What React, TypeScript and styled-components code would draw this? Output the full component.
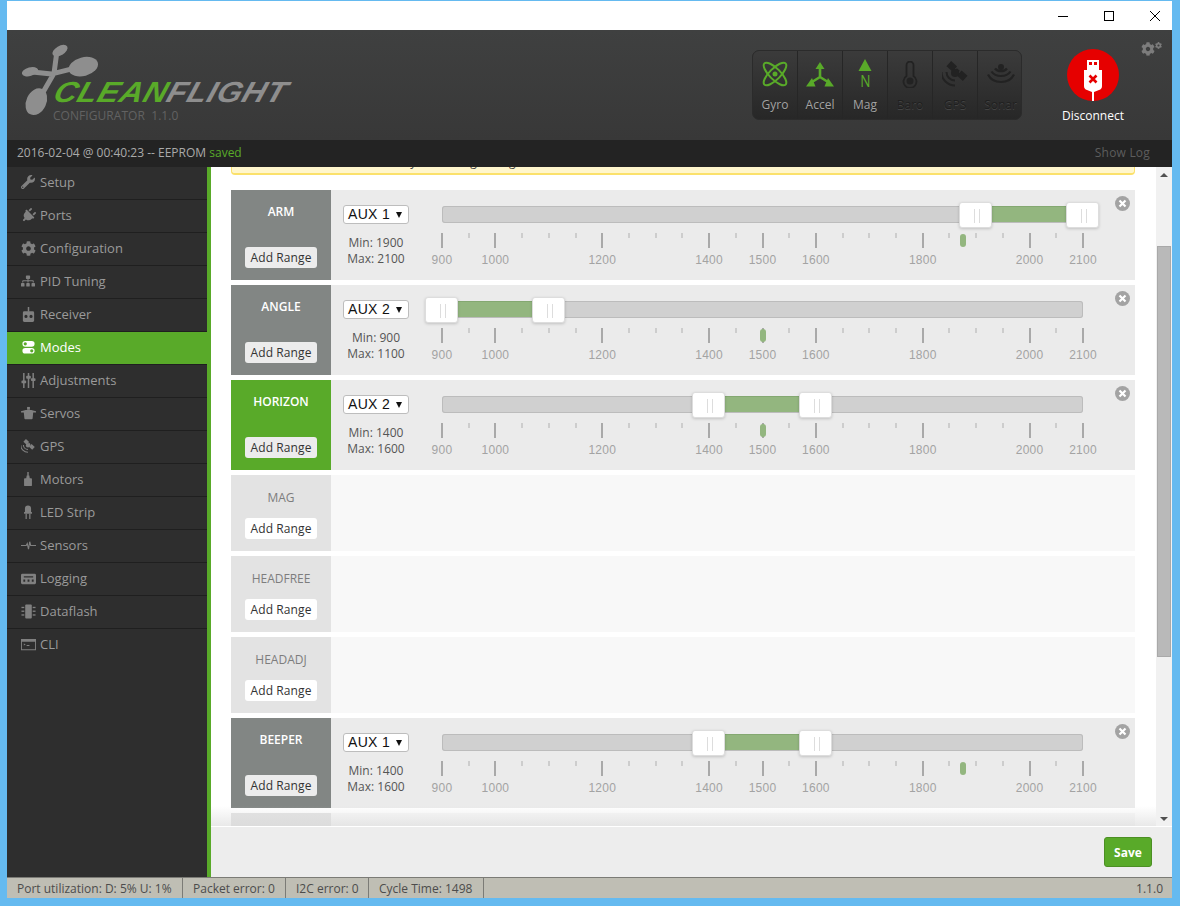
import React from "react"
import styled, { createGlobalStyle } from "styled-components"
import { FaWrench, FaPlug, FaCog, FaSitemap } from "react-icons/fa"

const GREEN = "#59aa29"

const GlobalStyle = createGlobalStyle`
    html, body {
        margin: 0;
        padding: 0;
        background: #65baf0;
    }
    * {
        box-sizing: border-box;
    }
`

const Frame = styled.div`
    width: 1180px;
    height: 906px;
    padding: 1px 8px 8px 7px;
    background: #65baf0;
    display: flex;
    flex-direction: column;
    overflow: hidden;
    font-family: "Open Sans", sans-serif;
    font-size: 12px;
`

const TitleBar = styled.div`
    height: 29px;
    flex: none;
    background: #fff;
    display: flex;
    justify-content: flex-end;
`

const WinButton = styled.div`
    width: 46px;
    height: 29px;
    display: flex;
    align-items: center;
    justify-content: center;
    color: #000;
    &:last-child {
        margin-right: -6px;
    }
`

const Header = styled.header`
    height: 110px;
    flex: none;
    background: linear-gradient(#3f4040, #383838);
    position: relative;
    display: flex;
    padding: 20px 0 0 15px;
`

const Logo = styled.div`
    width: 730px;
    position: relative;
    padding: 30px 0 0 33px;
`

const DroneSvg = styled.svg`
    position: absolute;
    left: -7px;
    top: -15px;
`

const WordMark = styled.div`
    font-family: "Liberation Sans", sans-serif;
    font-weight: 700;
    font-style: italic;
    font-size: 29px;
    line-height: 24px;
    height: 24px;
    letter-spacing: 0.6px;
    white-space: nowrap;
    color: #8e8e8e;
    margin-left: -4px;
    transform: skewX(-18deg) scaleX(1.1);
    transform-origin: left bottom;
    position: relative;
    span {
        color: ${GREEN};
    }
`

const LogoSub = styled.div`
    position: relative;
    margin: 4px 0 0 -2px;
    font-size: 12px;
    line-height: 16px;
    color: #626262;
    letter-spacing: 0.05px;
    white-space: pre;
`

const SensorGroup = styled.div`
    width: 270px;
    height: 70px;
    border: 1px solid #2b2b2b;
    border-radius: 7px;
    display: flex;
    overflow: hidden;
    background: #2a2a2a;
`

const SensorCell = styled.div<{ $on?: boolean }>`
    width: 45px;
    flex: none;
    border-right: 1px solid #262626;
    background: linear-gradient(#3b3b3b, #272727);
    display: flex;
    flex-direction: column;
    align-items: center;
    padding-top: 5px;
    color: ${(p) => (p.$on ? GREEN : "#222")};
    &:last-child {
        border-right: 0;
    }
`

const SensorIcon = styled.div`
    height: 36px;
    display: flex;
    flex-direction: column;
    align-items: center;
    justify-content: center;
`

const SensorLabel = styled.div<{ $on?: boolean }>`
    font-size: 12px;
    line-height: 18px;
    margin-top: 4px;
    color: ${(p) => (p.$on ? "#a3a3a3" : "#1f1f1f")};
    text-shadow: 0 1px 0 ${(p) => (p.$on ? "#222" : "#444")};
`

const MagLetter = styled.span`
    font-size: 17px;
    line-height: 16px;
    margin-top: 2px;
    transform: scaleX(0.8);
`

const ConnectBlock = styled.div`
    width: 72px;
    margin-left: 35px;
    display: flex;
    flex-direction: column;
    align-items: center;
    margin-top: -1px;
`

const ConnectButton = styled.div`
    width: 52px;
    height: 52px;
    border-radius: 50%;
    background: #e60000;
    display: flex;
    align-items: flex-start;
    justify-content: center;
    padding-top: 11px;
`

const ConnectLabel = styled.div`
    margin-top: 6px;
    font-size: 12px;
    line-height: 18px;
    color: #fff;
    white-space: nowrap;
`

const GearWrap = styled.div`
    position: absolute;
    right: 10px;
    top: 12px;
    color: #7c7c7c;
    display: flex;
    align-items: flex-start;
`

const LogBar = styled.div`
    height: 27px;
    flex: none;
    background: #232323;
    display: flex;
    align-items: center;
    justify-content: space-between;
    padding: 0 22px 2px 10px;
    color: #aaa;
    font-size: 12px;
    b {
        font-weight: 400;
        color: ${GREEN};
    }
`

const ShowLog = styled.div`
    color: #5d5d5d;
    letter-spacing: 0.2px;
`

const Main = styled.div`
    flex: 1;
    min-height: 0;
    display: flex;
`

const Sidebar = styled.nav`
    width: 204px;
    flex: none;
    background: #2e2e2e;
    border-right: 4px solid ${GREEN};
`

const NavItem = styled.div<{ $active?: boolean }>`
    height: 33px;
    padding: 0 0 2px 13px;
    display: flex;
    align-items: center;
    gap: 4px;
    border-bottom: 1px solid #1f1f1f;
    font-size: 13px;
    background: ${(p) => (p.$active ? GREEN : "transparent")};
    color: ${(p) => (p.$active ? "#fff" : "#9a9a9a")};
    font-weight: ${(p) => (p.$active ? 500 : 400)};
    &:last-child {
        border-bottom-color: transparent;
    }
`

const NavIcon = styled.span<{ $active?: boolean }>`
    width: 16px;
    height: 16px;
    flex: none;
    display: flex;
    align-items: center;
    justify-content: center;
    color: ${(p) => (p.$active ? "#fff" : "#808080")};
`

const PlugTilt = styled.span`
    display: flex;
    transform: rotate(45deg);
`

const Content = styled.div`
    flex: 1;
    min-width: 0;
    display: flex;
    flex-direction: column;
    background: #fff;
`

const ScrollArea = styled.div`
    flex: 1;
    min-height: 0;
    display: flex;
    position: relative;
`

const ModesViewport = styled.div`
    flex: 1;
    min-width: 0;
    overflow: hidden;
    position: relative;
    padding: 0 21px 0 20px;
`

const FadeOut = styled.div`
    position: absolute;
    left: 0;
    right: 0;
    bottom: 0;
    height: 20px;
    background: linear-gradient(rgba(224, 224, 224, 0), rgba(214, 214, 214, 0.55));
`

const Note = styled.div`
    height: 30px;
    margin-top: -22px;
    margin-bottom: 15px;
    background: #fff6cc;
    border: 1px solid #fbe16b;
    border-bottom-width: 2px;
    border-top: 0;
    border-radius: 0 0 4px 4px;
    padding: 0 0 0 10px;
    font-size: 12px;
    line-height: 33px;
    overflow: hidden;
    color: #444;
    white-space: nowrap;
`

const ModeRow = styled.div<{ $empty?: boolean }>`
    height: ${(p) => (p.$empty ? 76 : 90)}px;
    margin-bottom: 5px;
    display: flex;
    position: relative;
    background: ${(p) => (p.$empty ? "#f8f8f8" : "#ebebeb")};
`

const ModeName = styled.div<{ $state: "on" | "active" | "off" }>`
    width: 100px;
    flex: none;
    display: flex;
    flex-direction: column;
    align-items: center;
    justify-content: space-between;
    padding: ${(p) => (p.$state === "off" ? 14 : 13)}px 0 12px;
    font-size: 12px;
    line-height: 18px;
    font-weight: ${(p) => (p.$state === "off" ? 400 : 600)};
    color: ${(p) => (p.$state === "off" ? "#7d7d7d" : "#fff")};
    background: ${(p) =>
        p.$state === "on" ? GREEN : p.$state === "active" ? "#828684" : "#e3e3e3"};
`

const AddRange = styled.div<{ $empty?: boolean }>`
    width: 72px;
    height: 21px;
    border-radius: 3px;
    display: flex;
    align-items: center;
    justify-content: center;
    font-weight: 400;
    font-size: 12px;
    letter-spacing: 0.1px;
    color: #333;
    background: ${(p) => (p.$empty ? "#fff" : "#ececec")};
`

const RangeBody = styled.div`
    flex: 1;
    display: grid;
    grid-template-columns: 66px 641px;
    column-gap: 33px;
    padding: 15px 0 0 12px;
`

const ChannelCol = styled.div`
    display: flex;
    flex-direction: column;
    align-items: center;
`

const Channel = styled.div`
    width: 66px;
    height: 19px;
    background: #fff;
    border: 1px solid #bdbdbd;
    border-radius: 3px;
    font-family: "Liberation Sans", sans-serif;
    font-size: 14px;
    line-height: 17px;
    padding-left: 4px;
    letter-spacing: 0.3px;
    color: #111;
    position: relative;
    &::after {
        content: "";
        position: absolute;
        right: 6px;
        top: 6px;
        border-left: 3.5px solid transparent;
        border-right: 3.5px solid transparent;
        border-top: 6px solid #111;
    }
`

const Limits = styled.div`
    margin-top: 11px;
    font-size: 12px;
    line-height: 16px;
    text-align: center;
    color: #555;
`

const SliderCol = styled.div`
    position: relative;
`

const Track = styled.div`
    height: 17px;
    margin-top: 1px;
    background: #d0d0d0;
    box-shadow: inset 0 0 0 1px #bcbcbc;
    border-radius: 3px;
    position: relative;
`

const Fill = styled.div`
    position: absolute;
    top: 0;
    bottom: 0;
    background: #93b67f;
    border-top: 1px solid #84a871;
    border-bottom: 1px solid #bcbcbc;
`

const Handle = styled.div`
    position: absolute;
    top: -4px;
    width: 33px;
    height: 26px;
    margin-left: -17px;
    background: #fff;
    border: 1px solid #ddd;
    border-radius: 3px;
    box-shadow: 0 1px 3px rgba(0, 0, 0, 0.18);
    z-index: 1;
    &::before {
        content: "";
        position: absolute;
        left: 14px;
        top: 6px;
        width: 4px;
        height: 14px;
        border-left: 1px solid #ddd;
        border-right: 1px solid #ddd;
    }
`

const Scale = styled.div`
    position: relative;
    height: 40px;
    margin-top: 10px;
`

const Tick = styled.div<{ $big?: boolean }>`
    position: absolute;
    top: 0;
    width: 2px;
    margin-left: -1px;
    height: ${(p) => (p.$big ? 15 : 5)}px;
    background: ${(p) => (p.$big ? "#a9a9a9" : "#cdcdcd")};
`

const TickLabel = styled.div`
    position: absolute;
    top: 20px;
    width: 40px;
    margin-left: -20px;
    text-align: center;
    font-family: "Liberation Sans", sans-serif;
    font-size: 12px;
    line-height: 14px;
    letter-spacing: 0.25px;
    color: #a3a3a3;
`

const Marker = styled.div`
    position: absolute;
    top: 1px;
    width: 6px;
    height: 13px;
    margin-left: -3px;
    border-radius: 3px;
    background: #93b67f;
`

const RemoveRange = styled.div`
    position: absolute;
    right: 5px;
    top: 6px;
    width: 15px;
    height: 15px;
    border-radius: 50%;
    background: #a3a3a3;
    display: flex;
    align-items: center;
    justify-content: center;
`

const ScrollBar = styled.div`
    width: 16px;
    flex: none;
    background: #f1f1f1;
    display: flex;
    flex-direction: column;
    align-items: center;
    justify-content: flex-start;
    position: relative;
`

const ScrollArrow = styled.div<{ $down?: boolean }>`
    width: 16px;
    height: 16px;
    flex: none;
    display: flex;
    align-items: center;
    justify-content: center;
    &::after {
        content: "";
        border-left: 4px solid transparent;
        border-right: 4px solid transparent;
        ${(p) =>
            p.$down ? "border-top: 4px solid #505050;" : "border-bottom: 4px solid #505050;"}
    }
`

const ScrollGap = styled.div<{ $h: number }>`
    height: ${(p) => p.$h}px;
    flex: none;
`

const ScrollThumb = styled.div`
    width: 14px;
    height: 411px;
    flex: none;
    background: #b9b9b9;
    border: 1px solid #a9a9a9;
`

const SaveBar = styled.div`
    height: 51px;
    flex: none;
    background: #ededed;
    border-top: 1px solid #fff;
    display: flex;
    justify-content: flex-end;
    padding: 10px 20px 0 0;
`

const SaveButton = styled.div`
    width: 48px;
    height: 30px;
    background: ${GREEN};
    border: 1px solid #4c8f24;
    border-radius: 3px;
    color: #fff;
    font-weight: 700;
    font-size: 12px;
    display: flex;
    align-items: center;
    justify-content: center;
`

const StatusBar = styled.footer`
    height: 21px;
    flex: none;
    background: #bfbeb4;
    border-top: 1px solid #7b7b76;
    display: flex;
    align-items: center;
    color: #4c4c4c;
    font-size: 12px;
`

const StatusCell = styled.div<{ $w: number }>`
    width: ${(p) => p.$w}px;
    height: 100%;
    padding-left: 10px;
    border-right: 1px solid #7b7b76;
    display: flex;
    align-items: center;
    white-space: nowrap;
`

const Version = styled.div`
    margin-left: auto;
    padding-right: 9px;
`

const Glyph = ({ children, size = 15 }: { children: React.ReactNode; size?: number }) => (
    <svg width={size} height={size} viewBox="0 0 16 16" fill="currentColor">
        {children}
    </svg>
)

// shared by the nav entry and the sensor cell
const Satellite = ({ size }: { size: number }) => (
    <svg width={size} height={size} viewBox="0 0 26 26" fill="currentColor">
        <g transform="rotate(42 15 10)">
            <rect x="4" y="6.500" width="8" height="7" />
            <rect x="13" y="8" width="4" height="4" />
            <rect x="18" y="6.500" width="8" height="7" />
        </g>
        <path d="M13 19.500A8.500 8.500 0 0 1 4.500 11M13 24.500A13.500 13.500 0 0 1 -0.500 11" fill="none" stroke="currentColor" strokeWidth="2" />
        <circle cx="13" cy="12" r="4" />
    </svg>
)

const navItems: { label: string; icon: React.ReactNode; active?: boolean }[] = [
    { label: "Setup", icon: <FaWrench size={14} /> },
    { label: "Ports", icon: <PlugTilt><FaPlug size={15} /></PlugTilt> },
    { label: "Configuration", icon: <FaCog size={15} /> },
    { label: "PID Tuning", icon: <FaSitemap size={14} /> },
    {
        label: "Receiver",
        icon: (
            <Glyph>
                <rect x="7.200" y="0" width="1.600" height="5" />
                <path fillRule="evenodd" d="M3.500 4.500h9a1.500 1.500 0 0 1 1.500 1.500v8.500a1.500 1.500 0 0 1-1.500 1.500h-9A1.500 1.500 0 0 1 2 14.500V6a1.500 1.500 0 0 1 1.500-1.500zM5.300 8.300a1.700 1.700 0 1 0 0 3.400 1.700 1.700 0 0 0 0-3.400zm5.400 0a1.700 1.700 0 1 0 0 3.400 1.700 1.700 0 0 0 0-3.400z" />
            </Glyph>
        ),
    },
    {
        label: "Modes",
        active: true,
        icon: (
            <Glyph size={13}>
                <path fillRule="evenodd" d="M4 0h8a3.500 3.500 0 0 1 0 7H4a3.500 3.500 0 0 1 0-7zm0 1.500a2 2 0 1 0 0 4 2 2 0 0 0 0-4z" />
                <path fillRule="evenodd" d="M4 8.500h8a3.500 3.500 0 0 1 0 7H4a3.500 3.500 0 0 1 0-7zm8 1.500a2 2 0 1 0 0 4 2 2 0 0 0 0-4z" />
            </Glyph>
        ),
    },
    {
        label: "Adjustments",
        icon: (
            <Glyph>
                <rect x="2.200" y="0" width="1.600" height="16" />
                <rect x="7.200" y="0" width="1.600" height="16" />
                <rect x="12.200" y="0" width="1.600" height="16" />
                <rect x="0.500" y="8" width="5" height="3" rx="1" />
                <rect x="5.500" y="3" width="5" height="3" rx="1" />
                <rect x="10.500" y="5.500" width="5" height="3" rx="1" />
            </Glyph>
        ),
    },
    {
        label: "Servos",
        icon: (
            <Glyph>
                <rect x="6.500" y="1" width="3" height="3" />
                <path d="M0 5.500l5-1.200h6l5 1.200v1.500H13l-.6 6a1 1 0 0 1-1 1H4.600a1 1 0 0 1-1-1L3 7H0z" />
            </Glyph>
        ),
    },
    { label: "GPS", icon: <Satellite size={14} /> },
    {
        label: "Motors",
        icon: (
            <Glyph size={14}>
                <rect x="7.200" y="0" width="1.600" height="5" />
                <path d="M6.500 4h3l.5 3h1.500a1 1 0 0 1 1 1v7a1 1 0 0 1-1 1h-7a1 1 0 0 1-1-1V8a1 1 0 0 1 1-1H6z" />
            </Glyph>
        ),
    },
    {
        label: "LED Strip",
        icon: (
            <Glyph size={14}>
                <path d="M4.500 4a3.500 3.500 0 0 1 7 0v4h1v2h-9V8h1z" />
                <rect x="5.200" y="10" width="1.400" height="6" />
                <rect x="9.400" y="10" width="1.400" height="6" />
            </Glyph>
        ),
    },
    {
        label: "Sensors",
        icon: (
            <Glyph>
                <path d="M0 8h5.500l1.200-2L8 12l1.300-8 1 4H16" fill="none" stroke="currentColor" strokeWidth="1.200" />
            </Glyph>
        ),
    },
    {
        label: "Logging",
        icon: (
            <Glyph>
                <path fillRule="evenodd" d="M1.500 3h13A1.500 1.500 0 0 1 16 4.500v8a1.500 1.500 0 0 1-1.500 1.500h-13A1.500 1.500 0 0 1 0 12.500v-8A1.500 1.500 0 0 1 1.500 3zM3 5.500v1.500h10V5.500zM2.500 9v2.500h2V9zm4.500 0v2.500h2V9zm4.500 0v2.500h2V9z" />
            </Glyph>
        ),
    },
    {
        label: "Dataflash",
        icon: (
            <Glyph>
                <rect x="4.500" y="0.500" width="7" height="15" rx="1" />
                <rect x="0.500" y="3" width="3" height="1.400" />
                <rect x="0.500" y="7" width="3" height="1.400" />
                <rect x="0.500" y="11" width="3" height="1.400" />
                <rect x="12.500" y="3" width="3" height="1.400" />
                <rect x="12.500" y="7" width="3" height="1.400" />
                <rect x="12.500" y="11" width="3" height="1.400" />
            </Glyph>
        ),
    },
    {
        label: "CLI",
        icon: (
            <Glyph>
                <path fillRule="evenodd" d="M0 2h16v12H0zM1 5v8h14V5z" />
                <path d="M3 7l2 1-2 1zM6 8.500h3v1H6z" />
            </Glyph>
        ),
    },
]

const MIN = 900
const MAX = 2100
const pct = (v: number) => ((v - MIN) / (MAX - MIN)) * 100

const BIG = [900, 1000, 1200, 1400, 1500, 1600, 1800, 2000, 2100]
const TICKS = Array.from({ length: 25 }, (_, i) => MIN + i * 50)

interface ModeData {
    name: string
    channel?: string
    from?: number
    to?: number
    value?: number
    on?: boolean
}

const modes: ModeData[] = [
    { name: "ARM", channel: "AUX 1", from: 1900, to: 2100, value: 1875 },
    { name: "ANGLE", channel: "AUX 2", from: 900, to: 1100, value: 1500 },
    { name: "HORIZON", channel: "AUX 2", from: 1400, to: 1600, value: 1500, on: true },
    { name: "MAG" },
    { name: "HEADFREE" },
    { name: "HEADADJ" },
    { name: "BEEPER", channel: "AUX 1", from: 1400, to: 1600, value: 1875 },
    { name: "" },
]

function RangeSlider(props: { from: number; to: number; value: number }) {
    return (
        <SliderCol>
            <Track>
                <Fill style={{ left: `${pct(props.from)}%`, width: `${pct(props.to) - pct(props.from)}%` }} />
                <Handle style={{ left: `${pct(props.from)}%` }} />
                <Handle style={{ left: `${pct(props.to)}%` }} />
            </Track>
            <Scale>
                {TICKS.map((t) => (
                    <Tick key={t} $big={BIG.includes(t)} style={{ left: `${pct(t)}%` }} />
                ))}
                {BIG.map((t) => (
                    <TickLabel key={t} style={{ left: `${pct(t)}%` }}>{t}</TickLabel>
                ))}
                <Marker style={{ left: `${pct(props.value)}%` }} />
            </Scale>
        </SliderCol>
    )
}

function Mode({ mode }: { mode: ModeData }) {
    const hasRange = mode.channel !== undefined
    const state = mode.on ? "on" : hasRange ? "active" : "off"
    return (
        <ModeRow $empty={!hasRange}>
            <ModeName $state={state}>
                {mode.name && <span>{mode.name}</span>}
                {mode.name && <AddRange $empty={!hasRange}>Add Range</AddRange>}
            </ModeName>
            {hasRange && (
                <RangeBody>
                    <ChannelCol>
                        <Channel>{mode.channel}</Channel>
                        <Limits>
                            Min: {mode.from}
                            <br />
                            Max: {mode.to}
                        </Limits>
                    </ChannelCol>
                    <RangeSlider from={mode.from!} to={mode.to!} value={mode.value!} />
                    <RemoveRange>
                        <svg width="9" height="9" viewBox="0 0 9 9">
                            <path d="M1.500 1.500l6 6M7.500 1.500l-6 6" stroke="#fff" strokeWidth="2.200" />
                        </svg>
                    </RemoveRange>
                </RangeBody>
            )}
        </ModeRow>
    )
}

const sensors: { label: string; on?: boolean; icon: React.ReactNode }[] = [
    {
        label: "Gyro",
        on: true,
        icon: (
            <svg width="26" height="26" viewBox="0 0 26 26" fill="none" stroke="currentColor" strokeWidth="2">
                <ellipse cx="13" cy="13" rx="5.500" ry="15" transform="rotate(45 13 13)" />
                <ellipse cx="13" cy="13" rx="5.500" ry="15" transform="rotate(-45 13 13)" />
                <circle cx="13" cy="13" r="2.500" fill="currentColor" stroke="none" />
            </svg>
        ),
    },
    {
        label: "Accel",
        on: true,
        icon: (
            <svg width="28" height="25" viewBox="0 0 28 25" fill="currentColor">
                <path d="M14 0l4.500 7h-9z" />
                <path d="M0 24.500h9.500L6 16z" />
                <path d="M28 24.500h-9.500L22 16z" />
                <path d="M14 6v9M14 15l-8 5M14 15l8 5" fill="none" stroke="currentColor" strokeWidth="2.600" />
            </svg>
        ),
    },
    {
        label: "Mag",
        on: true,
        icon: (
            <>
                <svg width="14" height="12" viewBox="0 0 14 12" fill="currentColor">
                    <path d="M7 0l6.500 12H.5z" />
                </svg>
                <MagLetter>N</MagLetter>
            </>
        ),
    },
    {
        label: "Baro",
        icon: (
            <svg width="16" height="27" viewBox="0 0 16 27" fill="none" stroke="currentColor" strokeWidth="1.800">
                <path d="M4.500 15V4a3.500 3.500 0 0 1 7 0v11a6.500 6.500 0 1 1-7 0z" />
                <circle cx="8" cy="20" r="3.500" fill="currentColor" stroke="none" />
            </svg>
        ),
    },
    {
        label: "GPS",
        icon: <Satellite size={26} />,
    },
    {
        label: "Sonar",
        icon: (
            <svg width="28" height="21" viewBox="0 0 28 21" fill="none" stroke="currentColor" strokeWidth="2.200">
                <circle cx="14" cy="3" r="3" fill="currentColor" stroke="none" />
                <path d="M8 4.500c2.500 3.500 9.500 3.500 12 0M4.500 7.500c4 6 15 6 19 0M1 10.500c5 10 21 10 26 0" />
            </svg>
        ),
    },
]

export default function App() {
    return (
        <Frame>
            <GlobalStyle />
            <TitleBar>
                <WinButton>
                    <svg width="10" height="10" viewBox="0 0 10 10"><rect y="5" width="10" height="1" fill="currentColor" /></svg>
                </WinButton>
                <WinButton>
                    <svg width="10" height="10" viewBox="0 0 10 10"><rect x="0.500" y="0.500" width="9" height="9" fill="none" stroke="currentColor" /></svg>
                </WinButton>
                <WinButton>
                    <svg width="10" height="10" viewBox="0 0 10 10"><path d="M0 0l10 10M10 0L0 10" stroke="currentColor" /></svg>
                </WinButton>
            </TitleBar>
            <Header>
                <Logo>
                    <DroneSvg width="95" height="95" viewBox="0 0 285 285" fill="#8e8e8e">
                        <ellipse cx="205" cy="95" rx="45" ry="28" transform="rotate(-15 205 95)" />
                        <ellipse cx="64" cy="200" rx="30" ry="42" transform="rotate(25 64 200)" />
                        <ellipse cx="135" cy="47" rx="25" ry="14" transform="rotate(-30 135 47)" />
                        <ellipse cx="45" cy="110" rx="25" ry="13" transform="rotate(-15 45 110)" />
                        <path d="M125 55L117 115M165 103L117 115M45 110L117 118M117 115L85 170" fill="none" stroke="#8e8e8e" strokeWidth="15" />
                    </DroneSvg>
                    <WordMark><span>CLEAN</span>FLIGHT</WordMark>
                    <LogoSub>{"CONFIGURATOR  1.1.0"}</LogoSub>
                </Logo>
                <SensorGroup>
                    {sensors.map((s) => (
                        <SensorCell key={s.label} $on={s.on}>
                            <SensorIcon>{s.icon}</SensorIcon>
                            <SensorLabel $on={s.on}>{s.label}</SensorLabel>
                        </SensorCell>
                    ))}
                </SensorGroup>
                <ConnectBlock>
                    <ConnectButton>
                        <svg width="20" height="41" viewBox="0 0 20 41">
                            <path fillRule="evenodd" fill="#fff" d="M4 0h12v10h-12zM6 2v3h3V2zM11 2v3h3V2z" />
                            <path fill="#fff" d="M1 10h18v16q0 3-3 4l-5 2v9H9v-9l-5-2q-3-1-3-4z" />
                            <path d="M6.500 15.500l7 7M13.500 15.500l-7 7" stroke="#e60000" strokeWidth="2.600" />
                        </svg>
                    </ConnectButton>
                    <ConnectLabel>Disconnect</ConnectLabel>
                </ConnectBlock>
                <GearWrap>
                    <FaCog size={14} />
                    <FaCog size={7} />
                </GearWrap>
            </Header>
            <LogBar>
                <div>2016-02-04 @ 00:40:23 -- EEPROM <b>saved</b></div>
                <ShowLog>Show Log</ShowLog>
            </LogBar>
            <Main>
                <Sidebar>
                    {navItems.map((item) => (
                        <NavItem key={item.label} $active={item.active}>
                            <NavIcon $active={item.active}>{item.icon}</NavIcon>
                            <span>{item.label}</span>
                        </NavItem>
                    ))}
                </Sidebar>
                <Content>
                    <ScrollArea>
                        <ModesViewport>
                            <Note>the mode. Remember to save your settings using the Save button.</Note>
                            {modes.map((m, i) => (
                                <Mode key={i} mode={m} />
                            ))}
                            <FadeOut />
                        </ModesViewport>
                        <ScrollBar>
                            <ScrollArrow />
                            <ScrollGap $h={63} />
                            <ScrollThumb />
                            <ScrollGap $h={154} />
                            <ScrollArrow $down />
                        </ScrollBar>
                    </ScrollArea>
                    <SaveBar>
                        <SaveButton>Save</SaveButton>
                    </SaveBar>
                </Content>
            </Main>
            <StatusBar>
                <StatusCell $w={176}>Port utilization: D: 5% U: 1%</StatusCell>
                <StatusCell $w={103}>Packet error: 0</StatusCell>
                <StatusCell $w={83}>I2C error: 0</StatusCell>
                <StatusCell $w={115}>Cycle Time: 1498</StatusCell>
                <Version>1.1.0</Version>
            </StatusBar>
        </Frame>
    )
}
